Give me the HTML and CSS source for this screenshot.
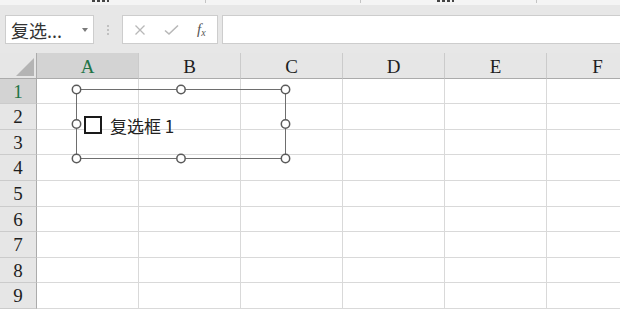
FILE: index.html
```html
<!DOCTYPE html>
<html lang="zh-CN">
<head>
    <meta charset="UTF-8">
    <title>复选框 - 工作表</title>
    <link rel="stylesheet" href="styles.css">
</head>
<body>
    <div class="app">
        <!-- only the bottom pixels of the ribbon group labels show -->
        <div class="ribbon-edge">
            <span class="rb-stub rb-first"></span>
            <span class="rb-tick rb-t1"></span>
            <span class="rb-tick rb-t2"></span>
            <span class="rb-stub rb-second"></span>
            <span class="rb-tick rb-t3"></span>
        </div>

        <div class="formula-bar">
            <div class="name-box">
                <span class="name-text">复选...</span>
                <span class="name-arrow"></span>
            </div>
            <div class="bar-grip">
                <svg width="4" height="12" viewBox="0 0 4 12">
                    <circle cx="2" cy="2" r="1" fill="#b3b3b3"/>
                    <circle cx="2" cy="6" r="1" fill="#b3b3b3"/>
                    <circle cx="2" cy="10" r="1" fill="#b3b3b3"/>
                </svg>
            </div>
            <div class="fx-box">
                <svg class="fx-icon" width="12" height="12" viewBox="0 0 12 12">
                    <path d="M1.5 1.5 L10.5 10.5 M10.5 1.5 L1.5 10.5" stroke="#b8b8b8" stroke-width="1.3" fill="none"/>
                </svg>
                <svg class="fx-icon" width="15" height="12" viewBox="0 0 15 12">
                    <path d="M1 6.5 L5 10 L14 1.5" stroke="#b8b8b8" stroke-width="1.6" fill="none"/>
                </svg>
                <span class="fx-insert"><i>f</i><sub>x</sub></span>
            </div>
            <div class="formula-input"></div>
        </div>

        <div class="sheet">
            <div class="cell corner"><span class="corner-mark"></span></div>
            <div class="cell col-head active">A</div>
            <div class="cell col-head">B</div>
            <div class="cell col-head">C</div>
            <div class="cell col-head">D</div>
            <div class="cell col-head">E</div>
            <div class="cell col-head">F</div>

            <div class="cell row-head active">1</div>
            <div class="cell"></div><div class="cell"></div><div class="cell"></div><div class="cell"></div><div class="cell"></div><div class="cell"></div>

            <div class="cell row-head">2</div>
            <div class="cell"></div><div class="cell"></div><div class="cell"></div><div class="cell"></div><div class="cell"></div><div class="cell"></div>

            <div class="cell row-head">3</div>
            <div class="cell"></div><div class="cell"></div><div class="cell"></div><div class="cell"></div><div class="cell"></div><div class="cell"></div>

            <div class="cell row-head">4</div>
            <div class="cell"></div><div class="cell"></div><div class="cell"></div><div class="cell"></div><div class="cell"></div><div class="cell"></div>

            <div class="cell row-head">5</div>
            <div class="cell"></div><div class="cell"></div><div class="cell"></div><div class="cell"></div><div class="cell"></div><div class="cell"></div>

            <div class="cell row-head">6</div>
            <div class="cell"></div><div class="cell"></div><div class="cell"></div><div class="cell"></div><div class="cell"></div><div class="cell"></div>

            <div class="cell row-head">7</div>
            <div class="cell"></div><div class="cell"></div><div class="cell"></div><div class="cell"></div><div class="cell"></div><div class="cell"></div>

            <div class="cell row-head">8</div>
            <div class="cell"></div><div class="cell"></div><div class="cell"></div><div class="cell"></div><div class="cell"></div><div class="cell"></div>

            <div class="cell row-head">9</div>
            <div class="cell"></div><div class="cell"></div><div class="cell"></div><div class="cell"></div><div class="cell"></div><div class="cell"></div>

            <!-- selected form control with its sizing handles -->
            <svg class="shape-frame" width="220" height="80" viewBox="0 0 220 80">
                <rect x="5.5" y="5.5" width="209" height="69" fill="none" stroke="#6e6e6e" stroke-width="1"/>
                <g fill="#fff" stroke="#5a5a5a" stroke-width="1.5">
                    <circle cx="5.5" cy="5.5" r="4.2"/>
                    <circle cx="110" cy="5.5" r="4.2"/>
                    <circle cx="214.5" cy="5.5" r="4.2"/>
                    <circle cx="5.5" cy="40" r="4.2"/>
                    <circle cx="214.5" cy="40" r="4.2"/>
                    <circle cx="5.5" cy="74.5" r="4.2"/>
                    <circle cx="110" cy="74.5" r="4.2"/>
                    <circle cx="214.5" cy="74.5" r="4.2"/>
                </g>
            </svg>
            <div class="checkbox-control">
                <span class="checkbox-box"></span>
                <span class="checkbox-label">复选框 1</span>
            </div>
        </div>
    </div>
</body>
</html>
```

FILE: styles.css
```css
* {
    margin: 0;
    padding: 0;
    box-sizing: border-box;
}

body {
    width: 620px;
    height: 309px;
    overflow: hidden;
    background: #fff;
    font-family: "Noto Sans CJK SC", "Noto Sans", sans-serif;
    color: #222;
}

.app {
    width: 620px;
    height: 309px;
    overflow: hidden;
}

/* bottom edge of the ribbon, mostly cut off */
.ribbon-edge {
    height: 5px;
    background: #f4f4f4;
    display: flex;
    overflow: hidden;
    padding-left: 92px;
}

.rb-stub {
    width: 17px;
    height: 2px;
    background: repeating-linear-gradient(90deg, #444 0 3px, transparent 3px 5px);
    flex-shrink: 0;
}

.rb-second {
    margin-left: 76px;
}

.rb-tick {
    width: 1px;
    height: 3px;
    background: #c4c4c4;
    flex-shrink: 0;
}

.rb-t1 {
    margin-left: 96px;
}

.rb-t2 {
    margin-left: 154px;
}

.rb-t3 {
    margin-left: 82px;
}

/* formula bar */
.formula-bar {
    height: 48px;
    background: #e7e7e7;
    display: flex;
    align-items: flex-start;
    padding: 10px 0 0 5px;
}

.name-box {
    width: 89px;
    height: 29px;
    background: #fff;
    border: 1px solid #cdcdcd;
    display: flex;
    align-items: center;
    padding-left: 5px;
}

.name-text {
    font-size: 18px;
    line-height: 1;
    color: #333;
    flex: 1;
}

.name-arrow {
    width: 0;
    height: 0;
    border-left: 3px solid transparent;
    border-right: 3px solid transparent;
    border-top: 4px solid #7a7a7a;
    margin-right: 5px;
}

.bar-grip {
    width: 28px;
    height: 29px;
    display: flex;
    align-items: center;
    justify-content: center;
}

.fx-box {
    width: 96px;
    height: 29px;
    background: #fff;
    border: 1px solid #cdcdcd;
    display: flex;
    align-items: center;
    padding-left: 11px;
    gap: 18px;
}

.fx-insert {
    font-family: "Liberation Serif", serif;
    font-size: 15px;
    color: #555;
    line-height: 1;
}

.fx-insert sub {
    font-size: 10px;
    font-style: italic;
    vertical-align: -2px;
}

.formula-input {
    flex: 1;
    height: 29px;
    margin-left: 4px;
    background: #fff;
    border: 1px solid #cdcdcd;
    border-right: none;
}

/* worksheet grid */
.sheet {
    position: relative;
    display: grid;
    grid-template-columns: 37px repeat(6, 102px);
    grid-template-rows: 26px 25px 26px 25px 26px 26px 25px 26px 25px 26px;
}

.cell {
    border-right: 1px solid #d9d9d9;
    border-bottom: 1px solid #d9d9d9;
    background: #fff;
}

.corner {
    background: #e6e6e6;
    border-right: 1px solid #ababab;
    border-bottom: 1px solid #ababab;
    display: flex;
    justify-content: flex-end;
    align-items: flex-end;
    padding: 0 2px 2px 0;
}

.corner-mark {
    width: 0;
    height: 0;
    border-left: 18px solid transparent;
    border-bottom: 18px solid #b4b4b4;
}

.col-head,
.row-head {
    background: #e6e6e6;
    font-family: "Liberation Serif", serif;
    font-size: 19px;
    color: #1e1e1e;
    display: flex;
    align-items: center;
    justify-content: center;
    line-height: 1;
}

.col-head {
    border-right: 1px solid #cbcbcb;
    border-bottom: 1px solid #ababab;
    padding-top: 1px;
}

.row-head {
    border-right: 1px solid #ababab;
    border-bottom: 1px solid #cbcbcb;
}

.col-head.active,
.row-head.active {
    background: #d3d3d3;
    color: #217346;
}

.shape-frame {
    position: absolute;
    left: 71px;
    top: 31px;
}

.checkbox-control {
    position: absolute;
    left: 84px;
    top: 62px;
    display: flex;
    align-items: center;
    gap: 8px;
    height: 20px;
}

.checkbox-box {
    width: 18px;
    height: 18px;
    border: 2px solid #1a1a1a;
    background: #fff;
}

.checkbox-label {
    font-size: 17px;
    line-height: 1;
    color: #222;
}
```
